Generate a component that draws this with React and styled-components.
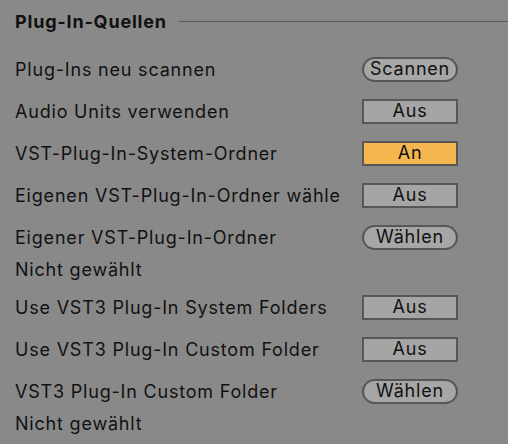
import React from 'react'
import styled, { createGlobalStyle } from "styled-components"

const GlobalStyle = createGlobalStyle`
  html, body {
    margin: 0;
    padding: 0;
    background: #898989;
  }
  body {
    font-family: Inter, "Noto Sans", sans-serif;
    color: #111;
  }
`;

const rows = [
  { label: "Plug-Ins neu scannen", kind: "pill", value: "Scannen" },
  { label: "Audio Units verwenden", kind: "toggle", value: "Aus" },
  { label: "VST-Plug-In-System-Ordner", kind: "toggle", value: "An", on: true },
  { label: "Eigenen VST-Plug-In-Ordner wählen", kind: "toggle", value: "Aus" },
  { label: "Eigener VST-Plug-In-Ordner", kind: "pill", value: "Wählen", sub: "Nicht gewählt" },
  { label: "Use VST3 Plug-In System Folders", kind: "toggle", value: "Aus" },
  { label: "Use VST3 Plug-In Custom Folder", kind: "toggle", value: "Aus" },
  { label: "VST3 Plug-In Custom Folder", kind: "pill", value: "Wählen", sub: "Nicht gewählt" },
];

export default function App() {
  return (
    <>
      <GlobalStyle />
      <Panel>
        <Header>
          <Title>Plug-In-Quellen</Title>
          <Rule />
        </Header>
        <List>
          {rows.map((r, i) => (
            <React.Fragment key={i}>
              <Row>
                <Label>{r.label}</Label>
                {r.kind === "pill"
                  ? <Pill>{r.value}</Pill>
                  : <Toggle $on={r.on}>{r.value}</Toggle>}
              </Row>
              {r.sub && <SubLine>{r.sub}</SubLine>}
            </React.Fragment>
          ))}
        </List>
      </Panel>
    </>
  )
}

const Panel = styled.div`
  width: 508px;
  height: 444px;
  overflow: hidden;
  font-size: 18px;
  letter-spacing: 0.8px;
`;

const Header = styled.div`
  height: 42px;
  display: flex;
  align-items: center;
  padding-left: 15px;
  gap: 12px;
`;

const Title = styled.h2`
  margin: 0;
  font-size: 18px;
  font-weight: 700;
  white-space: nowrap;
`;

const Rule = styled.div`
  flex: 1;
  height: 1px;
  background: #5a5a5a;
`;

const List = styled.div`
  padding-top: 6px;
  display: flex;
  flex-direction: column;
`;

const Row = styled.div`
  height: 42px;
  display: flex;
  align-items: center;
  padding-left: 15px;
  padding-right: 50px;
`;

const Label = styled.div`
  width: 325px;
  flex: none;
  overflow: hidden;
  white-space: nowrap;
  margin-right: 22px;
`;

const SubLine = styled.div`
  height: 24px;
  line-height: 24px;
  padding: 0 0 4px 15px;
`;

const Button = styled.div`
  width: 96px;
  height: 25px;
  box-sizing: border-box;
  border: 2px solid #575757;
  display: flex;
  align-items: center;
  justify-content: center;
  line-height: 1;
`;

const Pill = styled(Button)`
  border-radius: 13px;
  background: #a6a6a6;
`;

const Toggle = styled(Button)`
  background: ${p => p.$on ? "#f6b64f" : "#a5a5a5"};
`;
